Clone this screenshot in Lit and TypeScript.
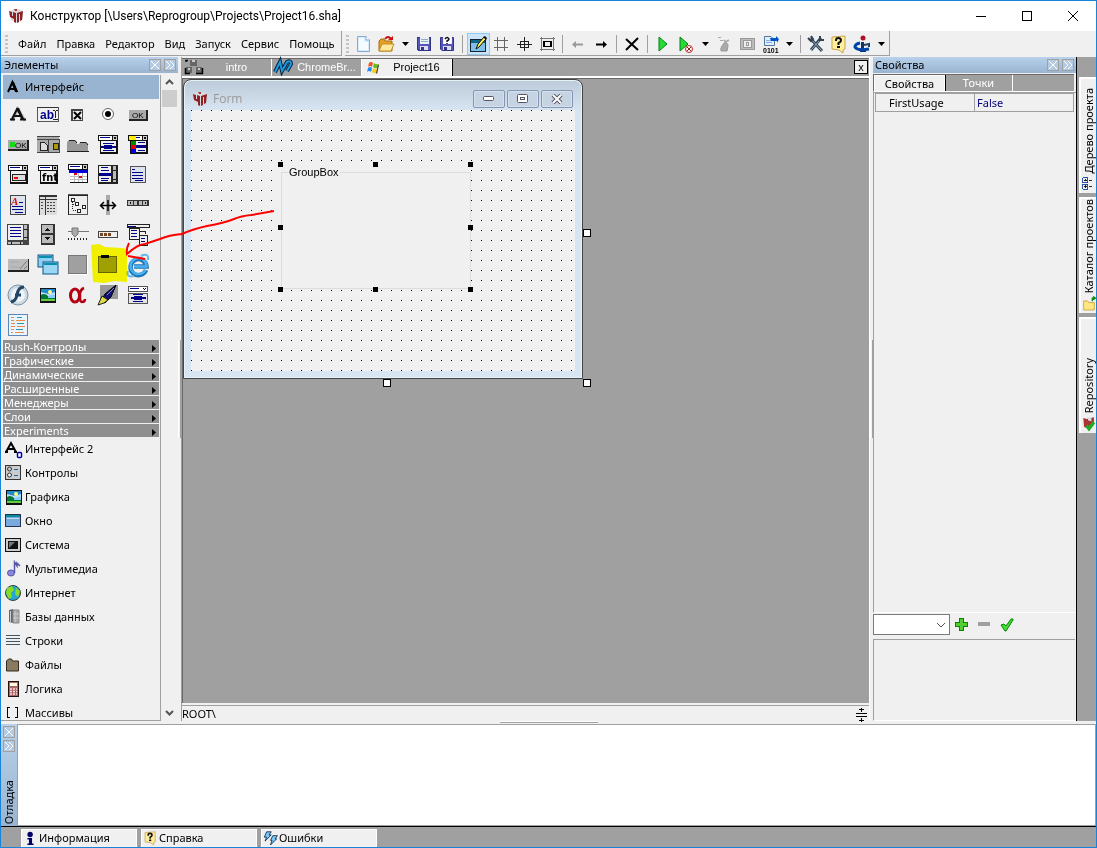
import { LitElement, html, css, svg, TemplateResult, SVGTemplateResult } from "lit";
import { customElement, state } from "lit/decorators.js";
import { classMap } from "lit/directives/class-map.js";

type Glyph = SVGTemplateResult;

const windowHead = (y: number, h: number) => svg`
  <rect x="1" y="${y}" width="20" height="6" fill="#111"/><rect x="2" y="${y + 1}" width="13" height="4" fill="#fff"/>
  <rect x="3" y="${y + 2}" width="10" height="1" fill="#008"/><rect x="16" y="${y + 1}" width="4" height="4" fill="#ccc"/>
  <rect x="17" y="${y + 2}" width="2" height="2" fill="#111"/>
  <rect x="3" y="${y + 6}" width="18" height="${h}" fill="#111"/><rect x="4" y="${y + 6}" width="15" height="${h - 2}" fill="#eee"/>`;

const question = svg`
  <path d="M4 4L17 3V16L15 17V20L11 17L4 16Z" fill="#ffef9e" stroke="#c9a44c"/>
  <path d="M8 8V7Q8 5 10.500 5Q13 5 13 7.500Q13 9 10.500 10V12" fill="none" stroke="#111" stroke-width="2"/>
  <rect x="9" y="13" width="3" height="2" fill="#111"/>`;

const picture = svg`
  <rect x="3" y="4" width="16" height="15" fill="#111"/><rect x="4" y="5" width="14" height="12" fill="#bdf"/>
  <path d="M4 5H18V8L12 10L4 8Z" fill="#28c"/><path d="M4 11Q8 8 12 13L18 14V17H4Z" fill="#073"/>
  <path d="M11 13Q14 10 18 11V14H11Z" fill="#8cf"/><circle cx="13" cy="8" r="2" fill="#ff8"/><path d="M4 15H18V17H4Z" fill="#6c4"/>`;

const floppy = svg`
  <path d="M4.500 4.500H17.500V17.500H6L4.500 16Z" fill="#55b" stroke="#338"/><rect x="7" y="4" width="9" height="7" fill="#e6f2f2"/>
  <path d="M8 6.500H15M8 8.500H15" stroke="#9ac"/><rect x="7" y="13" width="8" height="4" fill="#dde"/><rect x="8" y="14" width="3" height="3" fill="#338"/>`;

const glyphs: Record<string, Glyph> = {
  logo: svg`<path d="M5 6L9 4H14L18 6V14L12 18L6 15Z" fill="#d9dcdf"/>
    <path d="M4 6L7 7V11L8 11V7L11 8V18L9 17V14L5 12Z" fill="#8f2026"/><path d="M12 8L18 6L17 15L15 16V9L14 9V17L12 18Z" fill="#8f2026"/><path d="M9 4H12V6L10 6Z" fill="#a8383c"/>`,
  page: svg`<path d="M5.500 3.500H14L17.500 7V18.500H5.500Z" fill="#d8ecff" stroke="#88a8d0"/><path d="M7 5H12V9H16V17H7Z" fill="#f5fbff"/><path d="M14 3V7H18" fill="#fff" stroke="#88a8d0"/>`,
  open: svg`<path d="M4 8L6 6H9L10 8H17V18H4Z" fill="#e4a12a" stroke="#a66a08"/><path d="M4 18L7 11H19L16 18Z" fill="#ffe9a0" stroke="#c88e20"/>
    <path d="M10 6Q13 2 16 6" fill="none" stroke="#c11" stroke-width="2"/><path d="M13 7H18V3Z" fill="#c11"/>`,
  save: floppy,
  saveas: svg`${floppy}<rect x="8" y="4" width="7" height="7" fill="#fff"/><path d="M9 6Q11 3 13 6Q13 7 11 8V9M11 10V11" fill="none" stroke="#111" stroke-width="1.500"/>`,
  form: svg`<rect x="3.500" y="6.500" width="15" height="12" fill="#7ec0e8" stroke="#123"/><rect x="4" y="7" width="14" height="3" fill="#168"/>
    <path d="M9 16L11 11L17 4L19 6L12 14Z" fill="#fe5" stroke="#111"/><path d="M16 4L18 3L20 5L19 7Z" fill="#111"/>`,
  grid: svg`<path d="M7.500 4V18M14.500 4V18M4 7.500H18M4 14.500H18" stroke="#666"/>`,
  target: svg`<path d="M11.500 4V18M4 11.500H19" stroke="#222"/><rect x="7.500" y="8.500" width="8" height="6" fill="none" stroke="#222"/>`,
  frame: svg`<path d="M5.500 4V18M17.500 4V18M4 5.500H19M4 16.500H19" stroke="#777"/><rect x="7.500" y="8.500" width="8" height="5" fill="none" stroke="#000"/><rect x="8.500" y="8.500" width="6" height="5" fill="none" stroke="#000"/>`,
  left: svg`<path d="M5 11.500L9 8V10.500H16V12.500H9V15Z" fill="#999"/>`,
  right: svg`<path d="M17 11.500L13 8V10.500H6V12.500H13V15Z" fill="#000"/>`,
  cut: svg`<path d="M5 6L17 17M17 5L5 17" stroke="#000" stroke-width="2"/>`,
  play: svg`<path d="M7 4L15 11L7 18Z" fill="#2d3" stroke="#087c18"/>`,
  debug: svg`<path d="M5 4L13 11L5 18Z" fill="#2d3" stroke="#087c18"/><circle cx="14" cy="16" r="3.500" fill="#fff" stroke="#c22"/><path d="M12 14L16 18M16 14L12 18" stroke="#822"/>`,
  hand: svg`<path d="M5 4.500H8M7 7.500H10" stroke="#aaa"/><path d="M11 7L12.500 9L16 7" stroke="#aaa" fill="none" stroke-width="2"/><path d="M11 10Q15 9 15 13L14 18H8Q7 15 9 13Z" fill="#aaa" stroke="#999"/>`,
  eye: svg`<rect x="4.500" y="5.500" width="14" height="11" fill="#bbb" stroke="#999"/><rect x="7.500" y="7.500" width="8" height="7" fill="#eee" stroke="#999"/><rect x="10.500" y="9.500" width="2" height="3" fill="none" stroke="#999"/>`,
  binary: svg`<path d="M5.500 3.500H12L15.500 7V12.500H5.500Z" fill="#def" stroke="#579"/><path d="M7 7.500H12M7 9.500H13" stroke="#8ad"/><path d="M11 5H17V3L20 6L18 10V8H12Z" fill="#05c"/><text x="4" y="20" font-size="7" font-weight="bold" font-family="Liberation Sans">0101</text>`,
  tools: svg`<path d="M5 5L17 18M16 5L6 17" stroke="#345" stroke-width="3"/><path d="M5 5L17 18M15 7L6 17" stroke="#9ac"/><path d="M3 5L6 8L8 6L6 3M15 3L15 7L19 7" fill="none" stroke="#345" stroke-width="2"/>`,
  question,
  info: svg`<circle cx="12" cy="5" r="2.500" fill="#a12"/><path d="M10 9H13V17H15V19H9V17H10Z" fill="#136"/><path d="M9 10Q4 11 4 14Q6 18 18 16" fill="none" stroke="#04a" stroke-width="3"/><path d="M13 12L18 11V14" fill="none" stroke="#246" stroke-width="2"/>`,

  label: svg`<path d="M5 17L11 5L18 17" fill="none" stroke="#bbb" stroke-width="3"/><path d="M5 15L10 5L16 15M7 12H14" fill="none" stroke="#111" stroke-width="2"/><path d="M10 4H12L17 15H14Z" fill="#111"/><path d="M3 15.500H8M13 15.500H19" stroke="#111" stroke-width="2"/>`,
  edit: svg`<rect x="0.500" y="3.500" width="21" height="14" fill="#f0f0f0" stroke="#555"/><path d="M0 3.500H21" stroke="#333"/><text x="3" y="15" font-size="12" font-weight="bold" font-family="Liberation Sans" fill="#008">ab</text><path d="M16 6H18M19 6H21M18.500 7V14M16 15H21" stroke="#222"/>`,
  check: svg`<rect x="4" y="5" width="12" height="12" fill="#444"/><rect x="6" y="7" width="9" height="9" fill="#eee"/><path d="M7 8L14 15M14 8L7 15" stroke="#000" stroke-width="2"/>`,
  radio: svg`<circle cx="11" cy="10" r="5.500" fill="#fff" stroke="#666"/><circle cx="11" cy="10" r="3" fill="#000"/>`,
  button: svg`<rect x="2" y="6" width="19" height="11" fill="#222"/><rect x="2" y="6" width="17" height="9" fill="#aaa"/><text x="5" y="14" font-size="8" font-family="Liberation Sans">OK</text>`,
  bitbtn: svg`<rect x="1" y="6" width="21" height="11" fill="#222"/><rect x="1" y="6" width="19" height="9" fill="#aaa"/><rect x="3" y="8" width="5" height="5" fill="#1d1"/><text x="8" y="14" font-size="8" font-family="Liberation Sans">OK</text>`,
  toolbar: svg`<rect x="0" y="2" width="22" height="17" fill="#aaa"/><path d="M0 2.500H23M0 5.500H22M11.500 5V19M22 5V19M0 18.500H22" stroke="#444"/><path d="M3 8H7L10 11V16H3Z" fill="#ddd" stroke="#222"/><rect x="16" y="9" width="5" height="6" fill="#a90" stroke="#222"/>`,
  tabs: svg`<path d="M0 17V8L2 6H8L10 8V10H12L13 8H19L21 10V17Z" fill="#999"/><path d="M2 6.500H8L10 9M13 8.500H19L21 11M0 17.500H22" fill="none" stroke="#222"/>`,
  combo: svg`${windowHead(1, 13)}<path d="M6 9.500H17M6 16.500H17" stroke="#008"/><path d="M4 12H7V11H15V12H19V14H15V15H7V14H4Z" fill="#008"/>`,
  colorcombo: svg`${windowHead(1, 13)}<rect x="2" y="2" width="7" height="4" fill="#fe0"/><rect x="4" y="7" width="5" height="4" fill="#080"/><rect x="4" y="11" width="5" height="4" fill="#e00"/><rect x="4" y="15" width="5" height="4" fill="#00e"/><path d="M11 8.500H18M11 16.500H18" stroke="#008"/><path d="M9 12.500H19" stroke="#008" stroke-width="3"/>`,
  dropdown: svg`${windowHead(1, 13)}<rect x="5.500" y="10.500" width="13" height="6" fill="#ddd" stroke="#222"/><path d="M7 14H11" stroke="#e00" stroke-width="2"/>`,
  font: svg`${windowHead(1, 13)}<text x="5" y="17" font-size="11" font-weight="bold" font-family="DejaVu Sans Condensed">fnt</text>`,
  calendar: svg`${windowHead(0, 13)}<rect x="2" y="6" width="18" height="3" fill="#00d"/><rect x="3" y="9" width="17" height="9" fill="#fff"/><path d="M3 12H20M3 15H20M7 9V18M11 9V18M15 9V18" stroke="#bbb"/><path d="M7 9H10V11H7ZM12 12H15V14H12Z" fill="#d11"/>`,
  list: svg`<rect x="1" y="1" width="20" height="19" fill="#222"/><rect x="2" y="2" width="12" height="16" fill="#eee"/><path d="M4 3.500H11M4 6.500H12M4 14.500H12M4 16.500H11" stroke="#008"/><path d="M2 10.500H14" stroke="#008" stroke-width="3"/><path d="M16 2H19V18H16Z" fill="#bbb"/><path d="M15 6H20M15 15H20" stroke="#222"/>`,
  memo: svg`<path d="M3.500 2.500H18.500V18.500H3.500Z" fill="#dce3ec" stroke="#555"/><path d="M5 5.500H8M5 8.500H16M5 11.500H16M5 14.500H16M8 16.500H16" stroke="#008"/>`,
  rich: svg`<path d="M3.500 1.500H18.500V20.500H3.500Z" fill="#dce3ec" stroke="#444"/><text x="4" y="11" font-size="11" font-weight="bold" font-style="italic" font-family="Liberation Serif" fill="#d11">A</text><path d="M12 8.500H16M5 12.500H16M5 15.500H16M8 18.500H16" stroke="#008"/>`,
  table: svg`<rect x="2" y="1" width="18" height="20" fill="#ddd"/><path d="M2.500 21V1.500H20M2 2.500H20M2 5.500H20M8.500 3V21" stroke="#333" fill="none"/><path d="M10 8.500H19M10 11.500H19M10 14.500H19M10 17.500H19M4 8.500H7M4 11.500H7M4 14.500H7" stroke="#444" stroke-dasharray="2 1"/>`,
  tree: svg`<rect x="1.500" y="0.500" width="19" height="20" fill="#eee" stroke="#555"/><path d="M1 1.500H21M1.500 1V21" stroke="#222"/><path d="M5.500 6V16H12M6 10.500H11" fill="none" stroke="#222" stroke-dasharray="1 1"/><path d="M4.500 4.500H7.500V7.500H4.500ZM8.500 8.500H11.500V11.500H8.500ZM15.500 11.500H18.500V14.500H15.500ZM10.500 15.500H13.500V18.500H10.500Z" fill="#fff" stroke="#222"/>`,
  splitter: svg`<rect x="9" y="1" width="4" height="20" fill="#aaa"/><path d="M3 11.500H19M7 8L3.500 11.500L7 15M15 8L18.500 11.500L15 15M11 6V17" fill="none" stroke="#000" stroke-width="1.500"/>`,
  status: svg`<rect x="0" y="6" width="22" height="6" fill="#333"/><path d="M1 7H6V11H1ZM7 7H10V11H7ZM12 7H15V11H12ZM16 7H20V11H16Z" fill="#bbb"/><path d="M3 8H4V10H3ZM18 8H19V10H18Z" fill="#111"/>`,
  scroll: svg`<rect x="0" y="0" width="22" height="21" fill="#444"/><rect x="1" y="1" width="15" height="15" fill="#eee"/><path d="M3 3.500H14M3 6.500H14M3 9.500H14M3 12.500H14" stroke="#008"/><path d="M17 1H20V16H17ZM1 18H16V20H1Z" fill="#bbb"/><path d="M17 5H21M17 13H21M4 18V21M13 18V21" stroke="#222"/>`,
  spin: svg`<rect x="4" y="0" width="14" height="21" fill="#333"/><path d="M5 1H16V9H5ZM5 11H16V19H5Z" fill="#bbb"/><path d="M8 7L10.500 4L13 7ZM8 13H13L10.500 16Z" fill="#111"/>`,
  slider: svg`<path d="M1 7.500H22" stroke="#777"/><path d="M5 4H11V10L8 13L5 10Z" fill="#aaa" stroke="#777"/><path d="M1 15H21" stroke="#222" stroke-width="2" stroke-dasharray="1 2"/>`,
  progress: svg`<rect x="1.500" y="7.500" width="19" height="6" fill="#eee" stroke="#444"/><path d="M3 9H6V12H3ZM7 9H10V12H7ZM11 9H14V12H11Z" fill="#742"/>`,
  menus: svg`<path d="M0.500 0.500H22.500V3.500H0.500ZM2.500 4.500H12.500V15.500H2.500ZM12.500 11.500H20.500V21.500H12.500Z" fill="#eee" stroke="#222"/><path d="M1 2.500H9M4 6.500H10M4 9.500H10M4 12.500H10M14 14.500H18M14 17.500H18" stroke="#008"/><path d="M13 7.500H18.500V10" stroke="#222" fill="none"/>`,
  grip: svg`<rect x="1" y="5" width="21" height="13" fill="#222"/><rect x="1" y="5" width="20" height="11" fill="#bbb"/><path d="M3 8H12M3 13H13" stroke="#aaa"/><path d="M13 15L20 7M17 15L20 12" stroke="#777"/>`,
  windows: svg`<rect x="1" y="1" width="15" height="12" fill="#8fd0ee" stroke="#158"/><rect x="6" y="8" width="15" height="12" fill="#9ad7f5" stroke="#158"/><path d="M2 3H15M7 10H20" stroke="#0590b0" stroke-width="2"/>`,
  panel: svg`<rect x="1.500" y="1.500" width="18" height="18" fill="#a0a0a0" stroke="#777"/><path d="M2 20.500H21M20.500 2V20" stroke="#fff"/>`,
  group: svg`<rect x="1.500" y="2.500" width="18" height="16" fill="#a0a0a0" stroke="#666"/><rect x="4" y="1" width="8" height="3" fill="#000"/>`,
  ie: svg`<path d="M19 16A8 8 0 1 1 19.500 12.500H7" fill="none" stroke="#1c75b8" stroke-width="4.500"/><path d="M18.500 16A8 8 0 1 1 19.500 12.500H7" fill="none" stroke="#4db0ee" stroke-width="2.500"/><path d="M7 22Q-1 24 1 17M14 2Q22-2 21 6" fill="none" stroke="#62b8ec" stroke-width="2"/>`,
  flash: svg`<circle cx="11" cy="11" r="10" fill="#cddae4" stroke="#7891a8"/><circle cx="11" cy="11" r="7" fill="#eef4f8"/><path d="M17 3Q11 3 10 11Q9 17 4 18M8 11H14" fill="none" stroke="#234665" stroke-width="3"/>`,
  picture,
  alpha: svg`<ellipse cx="8" cy="11.500" rx="4.500" ry="6.500" fill="none" stroke="#b40012" stroke-width="3"/><path d="M17 4Q14 5 13 9V13Q13 18 15 18Q18 18 18 15" fill="none" stroke="#b40012" stroke-width="2.500"/>`,
  pen: svg`<rect x="3" y="1" width="18" height="14" fill="#999"/><path d="M19 1L8 10L4 17L8 19L14 13Z" fill="#117" stroke="#000"/><path d="M17 4L10 11" stroke="#88c"/><path d="M5 12L11 16L7 19L1 21Z" fill="#dd4" stroke="#222"/>`,
  combo2: svg`<rect x="1.500" y="2.500" width="19" height="5" fill="#fff" stroke="#555"/><rect x="1.500" y="9.500" width="19" height="10" fill="#e4e4e8" stroke="#555"/><path d="M3 4.500H12M6 10.500H16M6 17.500H16" stroke="#008"/><path d="M4 13H7V12H15V13H19V15H15V16H7V15H4Z" fill="#008"/><path d="M16 4L17.500 5.500L19 4" stroke="#008" fill="none"/>`,
  doc: svg`<rect x="1.500" y="0.500" width="19" height="21" fill="#e8f5ff" stroke="#5c87b8"/><path d="M4 3.500H7M4 9.500H8M4 15.500H7" stroke="#e84"/><path d="M9 6.500H18M10 12.500H18M8 18.500H17M4 18.500H6M4 6.500H7M4 12.500H8" stroke="#e84"/><path d="M10 3.500H15M10 9.500H17M9 15.500H16" stroke="#29a"/>`,

  letter: svg`<path d="M5 16L9.500 6L14 16M7 13H13" fill="none" stroke="#000" stroke-width="2"/><path d="M8 6H11L15 16H12Z"/>`,
  interface2: svg`<path d="M3 14L8 5L13 14M5 11H11M2 14H5M11 14H14" fill="none" stroke="#000" stroke-width="2"/><rect x="14.500" y="14.500" width="4" height="5" rx="1" fill="#fff" stroke="#00a" stroke-width="1.500"/>`,
  controls: svg`<rect x="2.500" y="3.500" width="15" height="14" fill="#ccc" stroke="#333"/><circle cx="6.500" cy="7" r="2" fill="none" stroke="#333"/><circle cx="6.500" cy="13" r="2" fill="#eee" stroke="#333"/><path d="M11 7.500H15M11 13.500H15" stroke="#16a"/>`,
  window: svg`<rect x="2.500" y="4.500" width="15" height="12" fill="#78aadd" stroke="#235"/><rect x="3" y="5" width="14" height="2" fill="#078a9a"/><path d="M4 8.500H16" stroke="#bde"/>`,
  system: svg`<rect x="2.500" y="4.500" width="15" height="13" fill="#ccc" stroke="#111"/><rect x="5" y="7" width="10" height="8" fill="#111"/><path d="M6 14L12 8H6Z" fill="#777"/>`,
  note: svg`<ellipse cx="8" cy="15" rx="3.500" ry="3" fill="#88d" stroke="#55a"/><path d="M11.500 15V4L14 8V5L17 8" fill="none" stroke="#55a" stroke-width="1.500"/>`,
  globe: svg`<circle cx="10" cy="11" r="7.500" fill="#28a5d5" stroke="#343"/><path d="M4 6L9 4L11 8L8 11L9 15L6 17L3 11ZM13 6L17 9L15 15L12 12Z" fill="#8d2"/>`,
  database: svg`<path d="M6 4L10 3V17L6 16Z" fill="#666"/><path d="M10 4H16V17H10Z" fill="#aaa" stroke="#888"/><path d="M12 5V16M7.500 5V16M10 8H16M10 12H16" stroke="#ccc"/>`,
  strings: svg`<path d="M3 5.500H17M3 8.500H17M3 11.500H17M3 14.500H17" stroke="#456"/>`,
  files: svg`<path d="M3.500 7L5.500 5H8.500L9.500 7H15.500V17H3.500Z" fill="#8a7a60" stroke="#332b20"/>`,
  logic: svg`<rect x="5.500" y="3.500" width="10" height="15" fill="#a66" stroke="#211"/><rect x="7" y="5" width="7" height="3" fill="#ffd"/><path d="M7 11H14M7 13.500H14M7 16H14" stroke="#fdd" stroke-width="1.500" stroke-dasharray="2 1"/>`,
  arrays: svg`<path d="M7 5.500H4.500V15.500H7M12 5.500H14.500V15.500H12" fill="none" stroke="#000" stroke-width="1.500"/>`,

  intro: svg`<path d="M8 4H15V10H8ZM4 11H10V17H4ZM14 11H20V17H14Z" fill="#666"/><path d="M10 4H13V6H10ZM6 12H8V14H6ZM16 12H18V14H16Z" fill="#ccc"/><path d="M4 6V4.500H6M3.500 12V17.500H8M14 17.500H20.500V12" stroke="#000" fill="none" stroke-width="1.500"/>`,
  wave: svg`<path d="M3 16L8 6L10 15L15 6Q19 4 19 8L15 15" fill="none" stroke="#024" stroke-width="4"/><path d="M3 16L8 6L10 15L15 6Q19 4 19 8L15 15" fill="none" stroke="#1d9bdf" stroke-width="2"/>`,
  flag: svg`<path d="M7 7Q9 5 11 7L10 11Q8 9 6 11Z" fill="#e52"/><path d="M12 7Q14 9 17 8L16 12Q13 13 11 11Z" fill="#6b2"/><path d="M6 12Q8 10 10 12L9 16Q7 14 5 16Z" fill="#28e"/><path d="M11 12Q13 14 16 13L15 17Q12 18 10 16Z" fill="#fc1"/><path d="M16 9L17 9L15 18L14 17" fill="#444"/>`,
  person: svg`<circle cx="10.500" cy="6.500" r="3.500" fill="#006"/><path d="M7 11H13V18H15V20H7V18H9V13H7Z" fill="#006"/>`,
  bolts: svg`<path d="M6 3H12L9 7H12L4 15L6 10H3ZM14 8H20L17 12H19L11 20L13 14H11Z" fill="#7cf" stroke="#013"/>`,
  nodes: svg`<path d="M3.500 4.500H9.500V10.500H3.500ZM3.500 12.500H9.500V18.500H3.500Z" fill="#eee" stroke="#039"/><path d="M5 7.500H8M6.500 6V9M5 15.500H8M6.500 14V17M11 7.500H15M11 15.500H15" stroke="#000"/>`,
  folder: svg`<path d="M4.500 8.500H9L11 10.500H17.500V19.500H4.500Z" fill="#ffe680" stroke="#c9a030"/><path d="M15 9V5H18M16 3L19 5L16 7" fill="none" stroke="#080" stroke-width="1.500"/>`,
  repo: svg`<path d="M4 5L8 6L17 4V13L11 18L5 16Z" fill="#a33"/><path d="M9 4L14 4V9L10 8Z" fill="#ddd"/><path d="M8 14L11 18L17 10" fill="none" stroke="#2a2" stroke-width="4"/>`,
  plus: svg`<path d="M8.500 5.500H12.500V9.500H16.500V13.500H12.500V17.500H8.500V13.500H4.500V9.500H8.500Z" fill="#5c3" stroke="#080"/>`,
  minus: svg`<rect x="4" y="9" width="12" height="4" fill="#a0a0a0"/>`,
  tick: svg`<path d="M4 12L7 11L9 13L14 6L16 6L16 7L9 18H8Z" fill="#4d3" stroke="#080"/>`,
  fit: svg`<path d="M6 10.500H17M6 13.500H17M9 6.500H14M9 17.500H14" stroke="#000"/><path d="M11 5H12V9H11ZM11 15H12V19H11Z"/>`,
};

const crisp = new Set(["save", "grid", "target", "frame", "edit", "button", "bitbtn", "toolbar", "combo", "colorcombo", "dropdown", "font", "calendar", "list", "memo", "rich", "table", "tree", "status", "scroll", "spin", "progress", "menus", "panel", "group", "combo2", "doc", "strings", "arrays", "minus", "plus", "nodes", "eye", "fit"]);

const icon = (name: string): TemplateResult => html`<svg
  class="icon" viewBox="0 0 22 22" width="22" height="22" aria-hidden="true"
  shape-rendering=${crisp.has(name) ? "crispEdges" : "auto"}>${glyphs[name]}</svg>`;

const shared = css`
  * { box-sizing: border-box; }
  button { font: inherit; color: inherit; background: none; border: 0; padding: 0; margin: 0; border-radius: 0; text-align: left; }
  .icon { display: block; flex: none; overflow: visible; }
`;

@customElement("dock-buttons")
class DockButtons extends LitElement {
  static styles = [shared, css`
    :host { display: flex; gap: 3px; }
    .tiny { width: 12px; height: 12px; border: 1px solid #a0a0a0; background: #b5cbe4; flex: none; }
    svg { display: block; }
  `];
  render() {
    return html`
      <button class="tiny" aria-label="Закрыть"><svg viewBox="0 0 10 10" width="10" height="10"><path d="M1 1L9 9M9 1L1 9" stroke="#fff"/></svg></button>
      <button class="tiny" aria-label="Свернуть"><svg viewBox="0 0 10 10" width="10" height="10"><path d="M1 1L5 5L1 9M5 1L9 5L5 9" fill="none" stroke="#fff"/></svg></button>`;
  }
}

@customElement("element-palette")
class ElementPalette extends LitElement {
  static styles = [shared, css`
    :host { display: flex; flex-direction: column; min-height: 0; }
    .head { height: 16px; flex: none; display: flex; align-items: center; justify-content: space-between; padding: 0 2px 0 3px; background: linear-gradient(#b9d1ea, #99b4d1); }
    .body { flex: 1; min-height: 0; display: flex; padding-top: 2px; }
    .list { flex: 1; min-width: 0; overflow: hidden; border-right: 1px solid #a0a0a0; border-bottom: 1px solid #a0a0a0; padding-left: 2px; padding-right: 1px; }
    .open { width: 100%; height: 24px; background: #99b4d1; display: flex; align-items: center; }
    .tools { display: grid; grid-template-columns: repeat(5, 30px); grid-auto-rows: 30px; padding-top: 1px; }
    .tools button { display: grid; place-items: center; }
    .bar { width: 100%; height: 13px; margin-bottom: 1px; display: flex; justify-content: space-between; align-items: center; padding: 0 3px 0 1px; background: #8f8f8f; color: #fff; line-height: 13px; }
    .bar svg { margin-top: 4px; }
    .row { width: 100%; height: 24px; display: flex; align-items: center; white-space: nowrap; padding-bottom: 2px; }
    .track { width: 17px; flex: none; display: flex; flex-direction: column; align-items: center; padding: 4px 0 5px; }
    .thumb { width: 15px; height: 17px; background: #cdcdcd; margin-top: 5px; margin-bottom: auto; }
  `];
  private tools = ["label", "edit", "check", "radio", "button", "bitbtn", "toolbar", "tabs", "combo", "colorcombo", "dropdown", "font", "calendar", "list", "memo", "rich", "table", "tree", "splitter", "status", "scroll", "spin", "slider", "progress", "menus", "grip", "windows", "panel", "group", "ie", "flash", "picture", "alpha", "pen", "combo2", "doc"];
  private bars = ["Rush-Контролы", "Графические", "Динамические", "Расширенные", "Менеджеры", "Слои", "Experiments"];
  private rows = [["interface2", "Интерфейс 2"], ["controls", "Контролы"], ["picture", "Графика"], ["window", "Окно"], ["system", "Система"], ["note", "Мультимедиа"], ["globe", "Интернет"], ["database", "Базы данных"], ["strings", "Строки"], ["files", "Файлы"], ["logic", "Логика"], ["arrays", "Массивы"]];
  render() {
    return html`
      <div class="head"><span>Элементы</span><dock-buttons></dock-buttons></div>
      <div class="body">
        <div class="list">
          <button class="open">${icon("letter")}Интерфейс</button>
          <div class="tools">${this.tools.map((t) => html`<button aria-label=${t}>${icon(t)}</button>`)}</div>
          ${this.bars.map((b) => html`<button class="bar">${b}<svg width="4" height="7"><path d="M0 0L4 3.500L0 7Z"/></svg></button>`)}
          ${this.rows.map(([g, label]) => html`<button class="row">${icon(g)}${label}</button>`)}
        </div>
        <div class="track">
          <svg width="9" height="6"><path d="M1 5L4.500 1.500L8 5" fill="none" stroke="#555" stroke-width="2"/></svg>
          <div class="thumb"></div>
          <svg width="9" height="6"><path d="M1 1L4.500 4.500L8 1" fill="none" stroke="#555" stroke-width="2"/></svg>
        </div>
      </div>`;
  }
}

@customElement("form-designer")
class FormDesigner extends LitElement {
  static styles = [shared, css`
    :host { display: block; position: relative; overflow: hidden; background: #a0a0a0; border-left: 1px solid #696969; border-top: 1px solid #696969; font-family: "Liberation Sans", Arial, sans-serif; }
    .form { position: absolute; left: 0; top: 0; width: 400px; height: 300px; border: 1px solid #444; border-radius: 8px 8px 0 0; background: linear-gradient(#bccbd9, #d7e4f2 30px); box-shadow: inset 0 0 0 1px #e8f0f8; padding: 0 7px 7px; display: flex; flex-direction: column; }
    .caption { height: 30px; flex: none; display: flex; align-items: center; gap: 2px; color: #999; font: 12px "Open Sans", sans-serif; padding: 7px 2px 0 0; }
    .caption .icon { margin-left: -2px; }
    .caption span { margin-right: auto; }
    .win { width: 32px; height: 18px; border: 1px solid #8496b4; border-radius: 2px; background: #c5d3e3; box-shadow: inset 0 0 0 1px #d5e1ee; display: grid; place-items: center; }
    .client { flex: 1; position: relative; background: conic-gradient(at 1px 1px, #f0f0f0 75%, #000 0) 0 0 / 10px 10px; }
    .groupbox { position: absolute; left: 90px; top: 55px; width: 190px; height: 125px; background: #f0f0f0; padding: 1px 0; display: flex; }
    fieldset { flex: 1; margin: 0; padding: 0 5px; border: 1px solid #dcdcdc; min-width: 0; }
    legend { padding: 0 1px; margin-left: 1px; font-size: 11px; line-height: 13px; }
    .grab { position: absolute; width: 5px; height: 5px; background: #000; translate: -3px -3px; }
    .size { position: absolute; width: 8px; height: 8px; border: 1px solid #000; background: #fff; }
    .l { left: 0; } .c { left: 50%; } .r { left: 100%; }
    .t { top: 0; } .m { top: 50%; } .b { top: 100%; }
    .east { left: 400px; top: 150px; } .south { left: 200px; top: 300px; } .corner { left: 400px; top: 300px; }
  `];
  render() {
    return html`
      <div class="form">
        <div class="caption">${icon("logo")}<span>Form</span>
          <button class="win" aria-label="Свернуть"><svg width="12" height="6"><rect x="0.500" y="0.500" width="10" height="4" rx="1" fill="#fff" stroke="#556"/></svg></button>
          <button class="win" aria-label="Развернуть"><svg width="12" height="10"><rect x="0.500" y="0.500" width="10" height="8" rx="1" fill="#fff" stroke="#556"/><rect x="3.500" y="3.500" width="4" height="2" fill="#fff" stroke="#556"/></svg></button>
          <button class="win" aria-label="Закрыть"><svg width="12" height="10"><path d="M2 1L10 9M10 1L2 9" stroke="#556" stroke-width="4"/><path d="M2 1L10 9M10 1L2 9" stroke="#fff" stroke-width="2"/></svg></button>
        </div>
        <div class="client">
          <div class="groupbox">
            <fieldset><legend>GroupBox</legend></fieldset>
            ${["l t", "c t", "r t", "l m", "r m", "l b", "c b", "r b"].map((p) => html`<i class="grab ${p}"></i>`)}
          </div>
        </div>
      </div>
      <i class="size east"></i><i class="size south"></i><i class="size corner"></i>`;
  }
}

@customElement("property-panel")
class PropertyPanel extends LitElement {
  static styles = [shared, css`
    :host { display: flex; flex-direction: column; min-height: 0; }
    .head { height: 16px; flex: none; display: flex; align-items: center; justify-content: space-between; padding: 0 2px; background: linear-gradient(#b9d1ea, #99b4d1); }
    .tabs { height: 18px; flex: none; display: flex; background: #a0a0a0; border: 1px solid #696969; border-bottom: 1px solid #fff; border-right: 0; margin: 1px 2px 0 0; line-height: 16px; }
    .tabs button { width: 68px; border-right: 1px solid #fff; color: #fff; text-align: center; }
    .tabs .on { width: 71px; background: #f0f0f0; color: #000; border: 1px solid #fff; border-bottom: 0; box-shadow: 1px 0 #000; line-height: 14px; }
    .area { flex: 1; border-left: 1px solid #a0a0a0; border-bottom: 1px solid #fff; border-top: 1px solid #a0a0a0; padding: 0 2px 0 1px; }
    table { width: 100%; border-collapse: collapse; table-layout: fixed; }
    th, td { border: 1px solid #a0a0a0; font-weight: normal; text-align: left; height: 18px; padding: 0 0 0 2px; line-height: 15px; }
    th { padding-left: 13px; }
    td { color: #000080; }
    .acts { flex: none; height: 26px; display: flex; align-items: center; gap: 1px; padding-bottom: 4px; }
    .pick { position: relative; width: 77px; height: 21px; display: flex; }
    select { width: 100%; border: 1px solid #7a7a7a; border-radius: 0; background: #fff; appearance: none; font: inherit; }
    .pick svg { position: absolute; right: 4px; top: 8px; pointer-events: none; }
    .notes { flex: none; height: 82px; border-left: 1px solid #a0a0a0; border-top: 1px solid #a0a0a0; border-bottom: 1px solid #fff; margin-right: 1px; }
  `];
  render() {
    return html`
      <div class="head"><span>Свойства</span><dock-buttons></dock-buttons></div>
      <div class="tabs"><button class="on">Свойства</button><button>Точки</button></div>
      <div class="area"><table><tbody><tr><th scope="row">FirstUsage</th><td>False</td></tr></tbody></table></div>
      <div class="acts">
        <label class="pick"><select aria-label="Фильтр"><option></option></select>
          <svg width="10" height="6"><path d="M1 1L5 5L9 1" fill="none" stroke="#555"/></svg></label>
        <button aria-label="Добавить">${icon("plus")}</button>
        <button aria-label="Удалить">${icon("minus")}</button>
        <button aria-label="Применить">${icon("tick")}</button>
      </div>
      <div class="notes"></div>`;
  }
}

@customElement("app-root")
class AppRoot extends LitElement {
  static styles = [shared, css`
    :host { display: flex; flex-direction: column; position: relative; height: 100vh; overflow: hidden; border: 1px solid #1883d7; background: #f0f0f0; color: #000; box-sizing: border-box; font: 11px/14px "Noto Sans", Tahoma, sans-serif; }
    .title { height: 30px; flex: none; display: flex; align-items: center; background: #fff; padding-left: 4px; font: 12px Roboto, sans-serif; }
    .title h1 { font: inherit; margin: 0 auto 0 3px; }
    .title button { width: 46px; height: 30px; display: grid; place-items: center; }
    .bars { height: 26px; flex: none; display: flex; align-items: stretch; }
    .menu, .bar { display: flex; align-items: center; border-right: 1px solid #a0a0a0; border-bottom: 1px solid #a0a0a0; height: 25px; padding: 2px 0 0; }
    .menu { gap: 10px; padding-left: 4px; padding-right: 6px; margin-right: 3px; }
    .dots { width: 3px; height: 19px; flex: none; background: linear-gradient(#c4c4c4 2px, transparent 2px) 0 0 / 3px 4px; }
    .bar { padding-left: 1px; }
    .bar .dots { margin-right: 3px; }
    .bar button { width: 23px; height: 22px; display: grid; place-items: center; }
    .bar .on { background: #cce4f7; outline: 1px solid #90c8f6; outline-offset: -1px; }
    .bar .more { width: 15px; }
    .sep { width: 1px; height: 18px; margin: 0 4px 0 3px; background: #a0a0a0; }
    .main { flex: 1; min-height: 0; display: flex; }
    element-palette { width: 177px; flex: none; }
    .split { width: 3px; flex: none; display: flex; align-items: center; }
    .split::after { content: ""; width: 2px; height: 98px; border-left: 1px solid #fff; border-right: 1px solid #a0a0a0; }
    .center { flex: 1; min-width: 0; display: flex; flex-direction: column; border-left: 1px solid #a0a0a0; border-right: 1px solid #fff; }
    .docs { height: 20px; flex: none; display: flex; background: #a0a0a0; border-top: 1px solid #696969; border-bottom: 2px solid #fff; margin-top: 1px; }
    .docs button { width: 90px; display: flex; align-items: center; color: #fff; border-right: 1px solid #fff; padding-bottom: 1px; font: 11px "Liberation Sans", sans-serif; }
    .docs span { flex: 1; text-align: center; padding-right: 2px; }
    .docs .on { background: #f0f0f0; color: #000; box-shadow: 1px 0 #000; }
    .docs .shut { width: 14px; height: 14px; margin: 1px 1px 0 auto; border: 1px solid #000; background: #f0f0f0; color: #000; justify-content: center; line-height: 10px; }
    form-designer { flex: 1; min-height: 0; }
    .path { height: 16px; flex: none; display: flex; align-items: center; justify-content: space-between; border-top: 1px solid #a0a0a0; margin-top: 2px; }
    .path .icon { margin-right: -3px; }
    property-panel { width: 203px; flex: none; }
    .rail { width: 20px; flex: none; background: #a0a0a0; border-left: 1px solid #000; padding: 20px 0 0 2px; display: flex; flex-direction: column; gap: 4px; }
    .rail button { height: 116px; background: #f0f0f0; border: 2px solid #fff; border-width: 2px 0 0 2px; display: flex; flex-direction: column; align-items: center; justify-content: flex-end; }
    .up { writing-mode: vertical-rl; rotate: 180deg; white-space: nowrap; }
    .rail .icon { width: 18px; height: 20px; }
    .grip { height: 3px; flex: none; display: flex; justify-content: center; }
    .grip i { width: 98px; height: 2px; border-top: 1px solid #fff; border-bottom: 1px solid #a0a0a0; }
    .log { height: 103px; flex: none; display: flex; border-bottom: 1px solid #000; }
    .side { width: 16px; flex: none; background: linear-gradient(#b9d1ea, #99b4d1); display: flex; flex-direction: column; align-items: center; justify-content: space-between; padding: 2px 0; }
    .side dock-buttons { flex-direction: column; gap: 2px; }
    textarea { flex: 1; border: 1px solid #a0a0a0; background: #fff; resize: none; outline: 0; }
    .foot { height: 20px; flex: none; display: flex; gap: 4px; background: #a0a0a0; padding: 2px 0 0 20px; }
    .foot button { width: 116px; display: flex; align-items: center; background: #f0f0f0; border: 1px solid #fff; border-bottom: 0; overflow: hidden; padding-bottom: 1px; }
    .foot .icon { width: 17px; height: 18px; }
    .ink { position: absolute; left: 0; top: 0; pointer-events: none; }
    .marker { mix-blend-mode: multiply; }
  `];
  @state() private doc = 2;
  private menu = ["Файл", "Правка", "Редактор", "Вид", "Запуск", "Сервис", "Помощь"];
  private tools = ["page", "open", ">", "save", "saveas", "|", "form", "grid", "target", "frame", "|", "left", "right", "|", "cut", "|", "play", "debug", ">", "hand", "eye", "binary", ">", "|", "tools", "question", "info", ">"];
  private docs = [["intro", "intro"], ["wave", "ChromeBr..."], ["flag", "Project16"]];

  private tool(name: string) {
    if (name === "|") return html`<i class="sep"></i>`;
    if (name === ">") return html`<button class="more" aria-label="Ещё"><svg width="7" height="4"><path d="M0 0H7L3.500 4Z"/></svg></button>`;
    return html`<button class=${classMap({ on: name === "form" })} aria-label=${name}>${icon(name)}</button>`;
  }

  render() {
    return html`
      <header class="title">${icon("logo")}<h1>Конструктор [\\Users\\Reprogroup\\Projects\\Project16.sha]</h1>
        <button aria-label="Свернуть"><svg width="10" height="10"><path d="M0 5.500H10" stroke="#000"/></svg></button>
        <button aria-label="Развернуть"><svg width="11" height="11"><rect x="0.500" y="0.500" width="9" height="9" fill="none" stroke="#000"/></svg></button>
        <button aria-label="Закрыть"><svg width="11" height="11"><path d="M0 0L10 10M10 0L0 10" stroke="#000"/></svg></button>
      </header>
      <div class="bars">
        <nav class="menu"><i class="dots"></i>${this.menu.map((m) => html`<button>${m}</button>`)}</nav>
        <div class="bar"><i class="dots"></i>${this.tools.map((t) => this.tool(t))}</div>
      </div>
      <div class="main">
        <element-palette></element-palette>
        <div class="split"></div>
        <div class="center">
          <div class="docs">
            ${this.docs.map(([g, label], i) => html`<button class=${classMap({ on: i === this.doc })} @click=${() => (this.doc = i)}>${icon(g)}<span>${label}</span></button>`)}
            <button class="shut" aria-label="Закрыть вкладку">x</button>
          </div>
          <form-designer></form-designer>
          <div class="path"><span>ROOT\\</span>${icon("fit")}</div>
        </div>
        <div class="split"></div>
        <property-panel></property-panel>
        <div class="rail">
          <button><span class="up">Дерево проекта</span>${icon("nodes")}</button>
          <button><span class="up">Каталог проектов</span>${icon("folder")}</button>
          <button><span class="up">Repository</span>${icon("repo")}</button>
        </div>
      </div>
      <div class="grip"><i></i></div>
      <div class="log">
        <div class="side"><dock-buttons></dock-buttons><span class="up">Отладка</span></div>
        <textarea aria-label="Отладка"></textarea>
      </div>
      <div class="foot">
        <button>${icon("person")}Информация</button>
        <button>${icon("question")}Справка</button>
        <button>${icon("bolts")}Ошибки</button>
      </div>
      <svg class="ink marker" width="300" height="300" aria-hidden="true"><path d="M90 244L98 243L104 246L121 247L126 248V281L114 280L103 282L92 281Z" fill="#ff0"/></svg>
      <svg class="ink" width="300" height="300" aria-hidden="true"><path d="M273 210Q262 212 250 214Q240 215 233 218Q223 222 206 225Q192 228 181 233Q168 234 159 238L144 243Q137 243 126 253Q125 248 128 242M127 255L144 258" fill="none" stroke="#f00" stroke-width="2"/></svg>`;
  }
}
